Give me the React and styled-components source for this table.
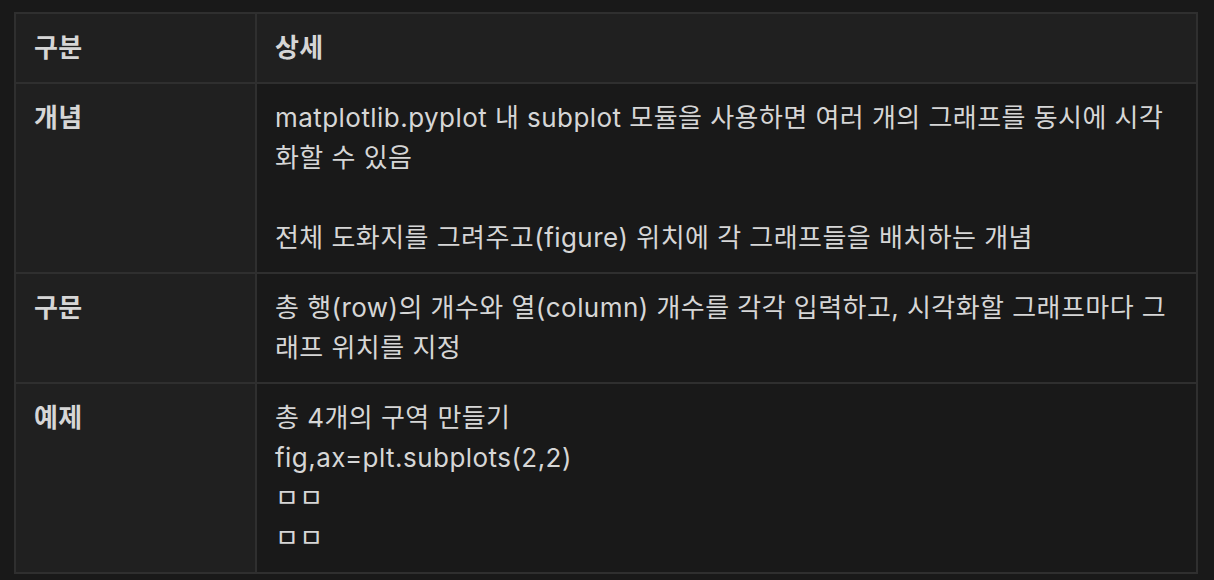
import React from "react";
import styled, { createGlobalStyle } from "styled-components";

const GlobalStyle = createGlobalStyle`
  html, body {
    margin: 0;
    padding: 0;
    background: #191919;
  }
  body {
    font-family: "Inter", "Noto Sans CJK KR", sans-serif;
    color: #d4d4d4;
  }
`;

const Page = styled.div`
  padding: 12px 18px 6px 14px;
  background: #191919;
  min-height: 580px;
  box-sizing: border-box;
`;

const Table = styled.table`
  width: 1182px;
  table-layout: fixed;
  border-collapse: collapse;
  border: 2px solid #2f2f2f;
  font-size: 26px;
  line-height: 40px;
  letter-spacing: 0.45px;
`;

const Col = styled.col`
  width: ${(p) => p.$w}px;
`;

const Cell = styled.td`
  border: 2px solid #2f2f2f;
  padding: 14px 18px;
  vertical-align: top;
  text-align: left;
  background: ${(p) => (p.$head ? "#202020" : "#191919")};
  color: #d6d6d6;
  font-weight: ${(p) => (p.$bold ? 600 : 400)};
  word-break: normal;
`;

const HeadCell = styled(Cell).attrs({ as: "th" })``;

const Line = styled.div`
  min-height: 40px;
`;

const rows = [
  {
    label: "개념",
    lines: [
      "matplotlib.pyplot 내 subplot 모듈을 사용하면 여러 개의 그래프를 동시에 시각화할 수 있음",
      "",
      "전체 도화지를 그려주고(figure) 위치에 각 그래프들을 배치하는 개념",
    ],
  },
  {
    label: "구문",
    lines: [
      "총 행(row)의 개수와 열(column) 개수를 각각 입력하고, 시각화할 그래프마다 그래프 위치를 지정",
    ],
  },
  {
    label: "예제",
    lines: ["총 4개의 구역 만들기", "fig,ax=plt.subplots(2,2)", "ㅁㅁ", "ㅁㅁ"],
  },
];

export default function App() {
  return (
    <>
      <GlobalStyle />
      <Page>
        <Table>
          <colgroup>
            <Col $w={241} />
            <Col $w={941} />
          </colgroup>
          <thead>
            <tr>
              <HeadCell $head $bold>구분</HeadCell>
              <HeadCell $head $bold>상세</HeadCell>
            </tr>
          </thead>
          <tbody>
            {rows.map((r) => (
              <tr key={r.label}>
                <Cell $head $bold>{r.label}</Cell>
                <Cell>
                  {r.lines.map((l, i) => (
                    <Line key={i}>{l}</Line>
                  ))}
                </Cell>
              </tr>
            ))}
          </tbody>
        </Table>
      </Page>
    </>
  );
}
